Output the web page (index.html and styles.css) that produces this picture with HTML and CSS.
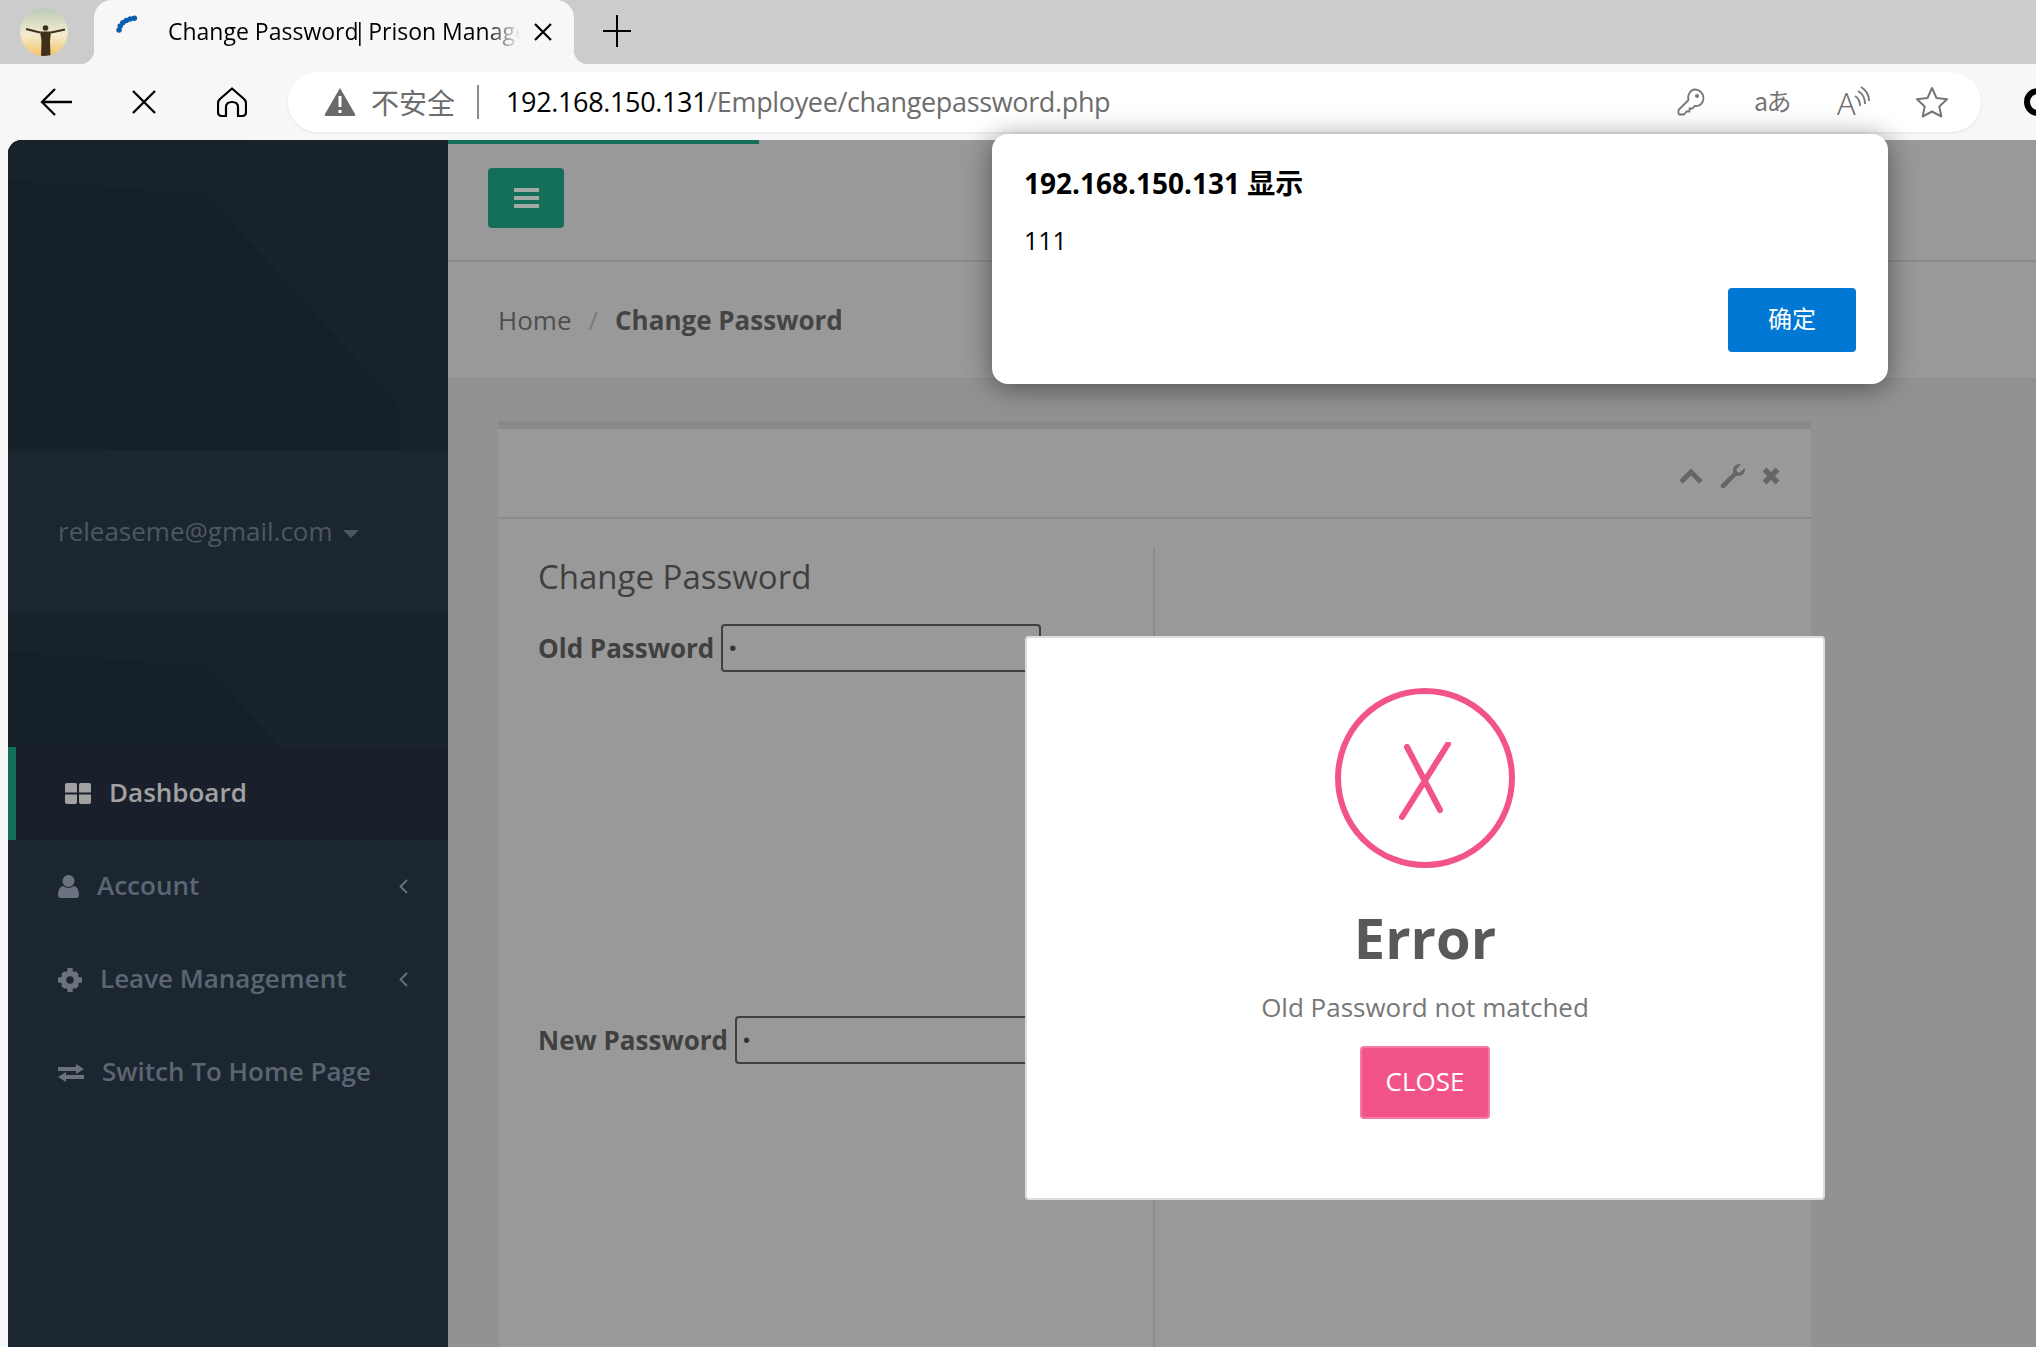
FILE: index.html
```html
<!DOCTYPE html>
<html lang="en">
<head>
  <meta charset="UTF-8">
  <title>Change Password| Prison Management</title>
  <meta name="viewport" content="width=device-width, initial-scale=1">
  <link rel="stylesheet" href="styles.css">
</head>
<body>
  <div id="window">

    <!-- browser chrome -->
    <div id="tab-strip">
      <svg class="avatar" viewBox="0 0 48 48">
        <defs>
          <linearGradient id="sky" x1="0" y1="0" x2="0" y2="1">
            <stop offset="0" stop-color="#bccbb8"/>
            <stop offset="0.55" stop-color="#f3ecd0"/>
            <stop offset="1" stop-color="#f6c468"/>
          </linearGradient>
          <clipPath id="round"><circle cx="24" cy="24" r="24"/></clipPath>
        </defs>
        <g clip-path="url(#round)">
          <rect width="48" height="48" fill="url(#sky)"/>
          <circle cx="25.500" cy="20" r="2.800" fill="#40301a"/>
          <path d="M6 21L20 24.500M45 21.500L31 24.500" stroke="#40301a" stroke-width="2"/>
          <path fill="#40301a" d="M20 23.500H31L30 33L30.500 48H21L21.500 33Z"/>
        </g>
      </svg>
      <div class="tab">
        <svg class="spinner" viewBox="0 0 24 18">
          <path d="M3 15Q4 5 20 3" fill="none" stroke="#0a5eb0" stroke-width="5.500" stroke-linecap="round" stroke-dasharray="0 4.200"/>
        </svg>
        <span class="tab-title">Change Password<span class="tab-pipe">|</span><span class="tab-title-rest"> Prison Management</span></span>
        <svg class="tab-close" viewBox="0 0 18 18">
          <path d="M1 1L17 17M17 1L1 17" stroke="#000" stroke-width="2.200"/>
        </svg>
      </div>
      <svg class="new-tab" viewBox="0 0 28 32">
        <path d="M14 0V32M0 16H28" stroke="#000" stroke-width="2"/>
      </svg>
    </div>

    <div id="toolbar">
      <svg class="tool-back" viewBox="0 0 32 28">
        <path d="M32 14H2M15 1L2 14L15 27" fill="none" stroke="#000" stroke-width="2.300"/>
      </svg>
      <svg class="tool-stop" viewBox="0 0 24 24">
        <path d="M1 1L23 23M23 1L1 23" stroke="#000" stroke-width="2.300"/>
      </svg>
      <svg class="tool-home" viewBox="0 0 30 30">
        <path d="M15 1.500L27 12Q29 14 29 16V25Q29 29 25 29H21V20Q21 15 15 15Q9 15 9 20V29H5Q1 29 1 25V16Q1 14 3 12Z" fill="none" stroke="#000" stroke-width="2.200" stroke-linejoin="round"/>
      </svg>
      <div class="address-bar">
        <svg class="warn" viewBox="0 0 32 30">
          <path d="M16 1L31 27Q32 29 29.500 29H2.500Q0 29 1 27Z" fill="#6a6a6a"/>
          <path d="M16 9V20M16 23V26" stroke="#fff" stroke-width="3"/>
        </svg>
        <span class="not-secure">不安全</span>
        <span class="addr-sep"></span>
        <span class="url"><b>192.168.150.131</b>/Employee/changepassword.php</span>
        <div class="addr-icons">
          <svg class="ic-key" viewBox="0 0 28 28">
            <path d="M18 1.500a8.500 8.500 0 0 1 8.500 8.500c0 5-4 9-9 8l-2 2.500h-3v3h-3l-2.500 3H2.500l-1-1v-3.500l10-10c-1.500-5 2-10.500 6.500-10.500z" fill="none" stroke="#777" stroke-width="1.800" stroke-linejoin="round"/>
            <circle cx="20" cy="8" r="2" fill="#777"/>
          </svg>
          <span class="ic-translate">aあ</span>
          <svg class="ic-read" viewBox="0 0 32 30">
            <text x="0" y="28" class="ic-read-a">A</text>
            <path d="M18 9Q23 12 23 19M21 4Q28 8 28 17M24 0Q32 5 32 14" fill="none" stroke="#777" stroke-width="1.800"/>
          </svg>
          <svg class="ic-star" viewBox="0 0 34 32">
            <path d="M17 2L21.500 12L32 13.300L24.300 20.500L26.300 30.500L17 25.500L7.700 30.500L9.700 20.500L2 13.300L12.500 12Z" fill="none" stroke="#777" stroke-width="2" stroke-linejoin="round"/>
          </svg>
        </div>
      </div>
      <svg class="profile" viewBox="0 0 14 28">
        <circle cx="16" cy="14" r="11" fill="none" stroke="#000" stroke-width="6"/>
      </svg>
    </div>

    <!-- the page itself, dimmed by the alert -->
    <div id="page">
      <aside id="sidebar">
        <div class="side-cover">
          <svg class="side-pattern" viewBox="0 0 440 311">
            <path d="M240 0H440V311H392V267L199 55Z" fill="#18232b"/>
            <path d="M0 0H240L199 55L0 40Z" fill="#17222a"/>
            <path d="M0 40L199 55L392 267V311H100L60 230L0 170Z" fill="#152029"/>
          </svg>
        </div>
        <div class="side-user">
          <span class="user-mail">releaseme@gmail.com</span>
          <i class="caret"></i>
        </div>
        <div class="side-gap">
          <svg class="side-pattern" viewBox="0 2 440 133">
            <path d="M240 0H440V311H392V267L199 55Z" fill="#18232b"/>
            <path d="M0 0H240L199 55L0 40Z" fill="#17222a"/>
            <path d="M0 40L199 55L392 267V311H100L60 230L0 170Z" fill="#152029"/>
          </svg>
        </div>
        <ul class="side-nav">
          <li class="active">
            <svg class="nav-ic ic-grid" viewBox="0 0 26 21">
              <path d="M2 0H10.500Q12 0 12 2V9.500H0V2Q0 0 2 0ZM16 0H24Q26 0 26 2V9.500H14V2Q14 0 16 0ZM0 11.500H12V19Q12 21 10 21H2Q0 21 0 19ZM14 11.500H26V19Q26 21 24 21H16Q14 21 14 19Z"/>
            </svg>
            <span class="nav-label">Dashboard</span>
          </li>
          <li>
            <svg class="nav-ic ic-user" viewBox="0 0 21 23">
              <circle cx="10.500" cy="6" r="6"/>
              <path d="M0 20Q0 12 5 11Q10.500 15 16 11Q21 12 21 20Q21 23 18 23H3Q0 23 0 20Z"/>
            </svg>
            <span class="nav-label">Account</span>
            <svg class="nav-arrow" viewBox="0 0 9 15"><path d="M8 1L1.500 7.500L8 14" fill="none" stroke-width="1.800"/></svg>
          </li>
          <li>
            <svg class="nav-ic ic-gear" viewBox="0 0 24 24">
              <circle cx="12" cy="12" r="6.500" fill="none" stroke-width="5.500" class="gear-ring"/>
              <path d="M9.500 0H14.500L15 4H9ZM9.500 24H14.500L15 20H9ZM0 9.500V14.500L4 15V9ZM24 9.500V14.500L20 15V9ZM3 6.500L6.500 3L9 6L6 9ZM21 6.500L17.500 3L15 6L18 9ZM3 17.500L6.500 21L9 18L6 15ZM21 17.500L17.500 21L15 18L18 15Z"/>
            </svg>
            <span class="nav-label">Leave Management</span>
            <svg class="nav-arrow" viewBox="0 0 9 15"><path d="M8 1L1.500 7.500L8 14" fill="none" stroke-width="1.800"/></svg>
          </li>
          <li>
            <svg class="nav-ic ic-swap" viewBox="0 0 26 18">
              <path d="M0 3H18V0L26 5L18 10V7H0ZM26 11H8V8L0 13L8 18V15H26Z"/>
            </svg>
            <span class="nav-label">Switch To Home Page</span>
          </li>
        </ul>
      </aside>

      <main id="content">
        <div class="loading-bar"></div>
        <header class="top-bar">
          <button class="menu-btn"><i></i><i></i><i></i></button>
        </header>
        <div class="crumbs">
          <span>Home</span>
          <span class="crumb-sep">/</span>
          <strong>Change Password</strong>
        </div>
        <div class="content-wrap">
          <section class="card">
            <div class="card-head">
              <svg class="card-tool" width="24" height="15" viewBox="0 0 24 15">
                <path d="M2 13L12 3L22 13" fill="none" stroke="#666" stroke-width="5"/>
              </svg>
              <svg class="card-tool" width="25" height="25" viewBox="0 0 25 25">
                <path d="M25 5Q25 12 17.500 12L16 12L5 23.500Q2.500 25 1 23.500Q0 21.500 1.500 20L13 9V7Q13 0 20 0L21 .5L16.500 5L17 8L20 8.500L24.500 4Z" fill="#666"/>
              </svg>
              <svg class="card-tool" width="18" height="18" viewBox="0 0 18 18">
                <path d="M2.500 2.500L15.500 15.500M15.500 2.500L2.500 15.500" stroke="#666" stroke-width="5.500"/>
              </svg>
            </div>
            <div class="card-body">
              <form class="pwd-form">
                <h2>Change Password</h2>
                <div class="field">
                  <label>Old Password</label>
                  <input type="password" value="1">
                </div>
                <div class="field field-new">
                  <label>New Password</label>
                  <input type="password" value="1">
                </div>
              </form>
              <div class="pwd-side"></div>
            </div>
          </section>
        </div>
      </main>
    </div>

    <!-- site error popup -->
    <div id="error-modal">
      <div class="err-circle">
        <svg viewBox="0 0 52 78">
          <path d="M8 5L41 68M49 2L3 75" fill="none" stroke="#f2548a" stroke-width="6" stroke-linecap="round"/>
        </svg>
      </div>
      <h1>Error</h1>
      <p>Old Password not matched</p>
      <button>CLOSE</button>
    </div>

    <!-- browser alert -->
    <div id="alert-box">
      <div class="alert-title">192.168.150.131 显示</div>
      <div class="alert-msg">111</div>
      <button>确定</button>
    </div>
  </div>
</body>
</html>
```

FILE: styles.css
```css
* {
  box-sizing: border-box;
}

html, body {
  margin: 0;
  height: 100%;
  overflow: hidden;
}

body {
  font-family: "Open Sans", "Noto Sans CJK SC", sans-serif;
  background: #f7f7f7;
}

#window {
  position: relative;
  width: 2036px;
  height: 1347px;
  display: flex;
  flex-direction: column;
  overflow: hidden;
}

/* tabs */
#tab-strip {
  height: 64px;
  flex: none;
  background: #cccccc;
  display: flex;
  align-items: flex-start;
}

.avatar {
  width: 48px;
  height: 48px;
  margin: 8px 26px 0 20px;
  flex: none;
}

.tab {
  position: relative;
  width: 480px;
  height: 64px;
  flex: none;
  background: #f7f7f7;
  border-radius: 18px 18px 0 0;
  display: flex;
  align-items: center;
  padding-left: 22px;
}

.tab::before,
.tab::after {
  content: "";
  position: absolute;
  bottom: 0;
  width: 14px;
  height: 14px;
}

.tab::before {
  left: -14px;
  background: radial-gradient(circle at 0 0, transparent 14px, #f7f7f7 14.5px);
}

.tab::after {
  right: -14px;
  background: radial-gradient(circle at 100% 0, transparent 14px, #f7f7f7 14.5px);
}

.spinner {
  width: 24px;
  height: 18px;
  margin: -16px 28px 0 0;
  flex: none;
}

.tab-title {
  width: 352px;
  flex: none;
  margin-top: -2px;
  font-size: 23px;
  color: #000;
  white-space: nowrap;
  overflow: hidden;
  -webkit-mask-image: linear-gradient(to right, #000 90%, transparent);
  mask-image: linear-gradient(to right, #000 90%, transparent);
}

.tab-pipe {
  margin-left: -5px;
}

.tab-title-rest {
  margin-left: -4px;
}

.tab-close {
  width: 18px;
  height: 18px;
  margin-left: 14px;
  flex: none;
}

.new-tab {
  width: 28px;
  height: 32px;
  margin: 15px 0 0 29px;
  flex: none;
}

/* toolbar */
#toolbar {
  height: 76px;
  flex: none;
  background: #f7f7f7;
  display: flex;
  align-items: center;
  padding-left: 40px;
}

#toolbar > svg {
  flex: none;
}

.tool-back {
  width: 32px;
  height: 28px;
}

.tool-stop {
  width: 24px;
  height: 24px;
  margin-left: 60px;
}

.tool-home {
  width: 30px;
  height: 30px;
  margin-left: 61px;
}

.address-bar {
  width: 1693px;
  height: 60px;
  flex: none;
  margin-left: 41px;
  background: #fff;
  border-radius: 30px;
  box-shadow: 0 1px 3px rgba(0, 0, 0, 0.08);
  display: flex;
  align-items: center;
  padding-left: 36px;
}

.warn {
  width: 32px;
  height: 30px;
  flex: none;
}

.not-secure {
  margin-left: 15px;
  font-size: 28px;
  color: #6d6d6d;
  font-family: "Noto Sans CJK SC", sans-serif;
  font-weight: 400;
}

.addr-sep {
  width: 2px;
  height: 34px;
  margin: 0 27px 0 22px;
  background: #8a8a8a;
}

.url {
  margin-top: -1px;
  font-size: 27px;
  color: #6d6d6d;
  letter-spacing: -0.35px;
  white-space: nowrap;
}

.url b {
  font-weight: 400;
  color: #000;
}

.addr-icons {
  margin-left: auto;
  display: flex;
  align-items: center;
  padding-right: 32px;
}

.ic-key {
  width: 28px;
  height: 28px;
}

.ic-translate {
  width: 35px;
  margin: -4px 0 0 49px;
  font-size: 25px;
  color: #777;
  font-family: "Noto Sans CJK JP", sans-serif;
  font-weight: 400;
  letter-spacing: -1.500px;
  white-space: nowrap;
}

.ic-read {
  width: 32px;
  height: 30px;
  margin-left: 48px;
  overflow: visible;
}

.ic-read-a {
  font-family: "Open Sans", sans-serif;
  font-size: 31px;
  font-weight: 300;
  fill: #666;
}

.ic-star {
  width: 34px;
  height: 32px;
  margin-left: 46px;
}

.profile {
  width: 14px;
  height: 28px;
  margin-left: 41px;
}

/* page */
#page {
  flex: 1;
  display: flex;
  padding-left: 8px;
  min-height: 0;
}

#sidebar {
  width: 440px;
  flex: none;
  background: #1c2630;
  border-radius: 14px 0 0 0;
  overflow: hidden;
}

.side-cover {
  height: 311px;
  background: #16212a;
}

.side-gap {
  height: 133px;
  background: #16212a;
}

.side-pattern {
  display: block;
  width: 100%;
  height: 100%;
}

.side-user {
  height: 163px;
  padding-left: 50px;
  display: flex;
  align-items: center;
  font-size: 26px;
  color: #4c5762;
}

.user-mail {
  margin-top: -4px;
}

.caret {
  width: 0;
  height: 0;
  margin: 2px 0 0 10px;
  border-left: 8px solid transparent;
  border-right: 8px solid transparent;
  border-top: 8px solid #4c5762;
}

.side-nav {
  list-style: none;
  margin: 0;
  padding: 0;
}

.side-nav li {
  height: 93px;
  padding: 0 40px 0 50px;
  display: flex;
  align-items: center;
  gap: 18px;
  font-size: 26px;
  font-weight: 600;
  color: #5c6574;
}

.nav-label {
  margin-top: -3px;
}

.side-nav li.active {
  background: #19202b;
  border-left: 8px solid #136f5a;
  padding-left: 49px;
  color: #a2a2a2;
}

.nav-ic {
  flex: none;
  fill: #6b727f;
}

.gear-ring {
  stroke: #6b727f;
}

.active .nav-ic {
  fill: #a2a2a2;
}

.ic-grid { width: 26px; height: 21px; }
.ic-user { width: 21px; height: 23px; }
.ic-gear { width: 24px; height: 24px; }
.ic-swap { width: 26px; height: 18px; }

.nav-arrow {
  width: 9px;
  height: 15px;
  margin-left: auto;
  stroke: #6b727f;
}

/* content */
#content {
  position: relative;
  flex: 1;
  min-width: 0;
  background: #929292;
  display: flex;
  flex-direction: column;
}

.loading-bar {
  position: absolute;
  top: 0;
  left: 0;
  width: 311px;
  height: 4px;
  background: #136f5a;
}

.top-bar {
  height: 122px;
  flex: none;
  padding: 28px 0 0 40px;
  background: #999;
  border-bottom: 2px solid #8b8b8b;
}

.menu-btn {
  width: 76px;
  height: 60px;
  padding: 0;
  border: none;
  border-radius: 4px;
  background: #136e5a;
  display: flex;
  flex-direction: column;
  align-items: center;
  justify-content: center;
  gap: 4px;
}

.menu-btn i {
  width: 25px;
  height: 4px;
  background: #a3aba7;
}

.crumbs {
  height: 118px;
  flex: none;
  padding-left: 50px;
  background: #999;
  border-bottom: 2px solid #8f8f8f;
  display: flex;
  align-items: center;
  font-size: 26px;
  color: #4f4f4f;
}

.crumb-sep {
  margin: 0 17px;
  color: #7b7b7b;
}

.crumbs strong {
  font-weight: 700;
  color: #444;
}

.content-wrap {
  flex: 1;
  min-height: 0;
  padding: 41px 225px 0 50px;
}

.card {
  height: 100%;
  background: #999;
  border-top: 8px solid #8a8a8a;
  display: flex;
  flex-direction: column;
}

.card-head {
  height: 90px;
  flex: none;
  padding: 6px 31px 0 0;
  border-bottom: 2px solid #8b8b8b;
  display: flex;
  align-items: center;
  justify-content: flex-end;
  gap: 17px;
}

.card-body {
  flex: 1;
  padding-top: 29px;
  display: flex;
}

.pwd-form {
  width: 657px;
  flex: none;
  padding-left: 40px;
  border-right: 2px solid #8b8b8b;
}

.pwd-form h2 {
  margin: -1px 0 17px;
  font-size: 33px;
  line-height: 60px;
  font-weight: 500;
  color: #3f3f3f;
}

.field {
  display: flex;
  align-items: center;
  gap: 7px;
}

.field-new {
  margin-top: 344px;
}

.field label {
  font-size: 26px;
  font-weight: 700;
  color: #404040;
}

.field input {
  width: 320px;
  height: 48px;
  padding: 0 6px;
  font-size: 20px;
  border: 2px solid #3f3f3f;
  border-radius: 4px;
  background: transparent;
  color: #333;
}

/* error popup */
#error-modal {
  position: absolute;
  left: 1025px;
  top: 636px;
  width: 800px;
  height: 564px;
  padding-top: 50px;
  background: #fff;
  border: 2px solid #dddddd;
  border-radius: 4px;
  display: flex;
  flex-direction: column;
  align-items: center;
  color: #777;
}

.err-circle {
  width: 180px;
  height: 180px;
  flex: none;
  border: 6px solid #f2548a;
  border-radius: 50%;
  display: flex;
  align-items: center;
  justify-content: center;
}

.err-circle svg {
  width: 52px;
  height: 78px;
  margin-top: 6px;
}

#error-modal h1 {
  margin: 31px 0 0;
  font-size: 56px;
  line-height: 76px;
  font-weight: 700;
  color: #595959;
}

#error-modal p {
  margin: 9px 0 0;
  font-size: 26px;
  line-height: 46px;
  color: #777;
}

#error-modal button {
  width: 130px;
  height: 73px;
  margin-top: 16px;
  padding: 0 0 4px;
  font-family: inherit;
  font-size: 26px;
  color: #fff;
  background: #f2548a;
  border: 2px solid #f779a3;
  border-radius: 4px;
}

/* alert */
#alert-box {
  position: absolute;
  left: 992px;
  top: 134px;
  width: 896px;
  height: 250px;
  padding: 31px 32px 0 32px;
  background: #fff;
  border-radius: 16px;
  box-shadow: 0 4px 28px rgba(0, 0, 0, 0.45);
}

.alert-title {
  font-size: 28px;
  line-height: 36px;
  font-weight: 700;
  color: #000;
}

.alert-msg {
  margin-top: 21px;
  font-size: 25px;
  line-height: 36px;
  color: #000;
}

#alert-box button {
  position: absolute;
  right: 32px;
  bottom: 32px;
  width: 128px;
  height: 64px;
  padding: 0 0 5px;
  border: none;
  border-radius: 4px;
  background: #0078d4;
  font-family: "Noto Sans CJK SC", sans-serif;
  font-size: 24px;
  color: #fff;
}
```
